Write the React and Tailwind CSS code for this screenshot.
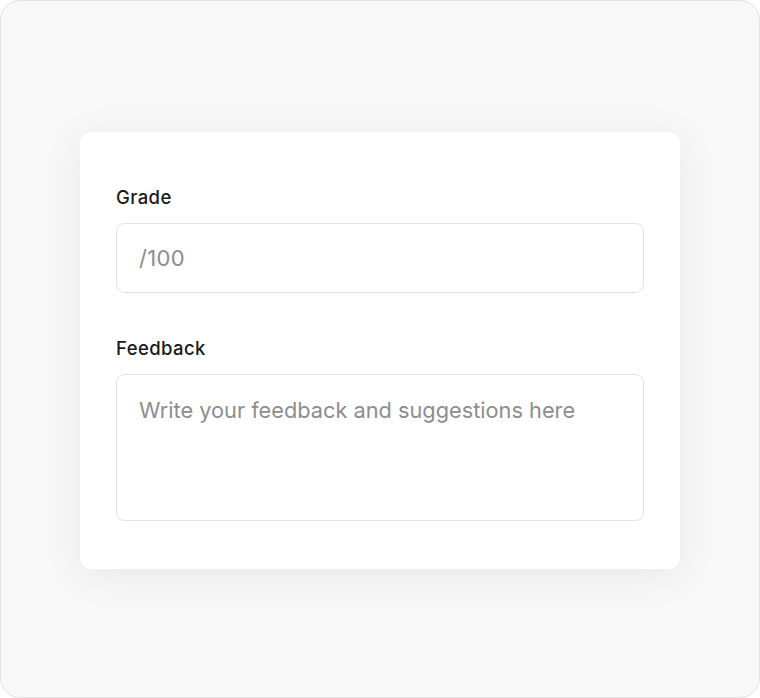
import React from "react";

export default function App() {
  return (
    <div className="w-[760px] h-[698px] bg-white" style={{ fontFamily: "Inter, 'Noto Sans', sans-serif" }}>
      <div className="w-full h-full rounded-[20px] border border-[#e3e3e3] bg-[#f8f8f8] flex items-start justify-center pt-[131px]">
        {/* Card */}
        <div className="w-[600px] rounded-xl bg-white shadow-[0_6px_40px_rgba(0,0,0,0.07)] px-9 pt-[51px] pb-[48px] flex flex-col gap-[41px]">
          <div className="flex flex-col gap-3">
            <label className="text-[18.5px] leading-7 tracking-[0.4px] font-medium text-[#1a1a1a]">Grade</label>
            <input
              type="text"
              placeholder="/100"
              className="h-[70px] w-full rounded-lg border border-[#e4e4e4] px-[22px] text-[22px] tracking-[0.3px] text-[#1a1a1a] placeholder:text-[#8d8d8d] outline-none"
            />
          </div>
          <div className="flex flex-col gap-3">
            <label className="text-[18.5px] leading-7 tracking-[0.4px] font-medium text-[#1a1a1a]">Feedback</label>
            <textarea
              placeholder="Write your feedback and suggestions here"
              className="h-[147px] w-full resize-none rounded-lg border border-[#e4e4e4] px-[22px] py-[19px] text-[21.75px] leading-8 text-[#1a1a1a] placeholder:text-[#8d8d8d] outline-none"
            />
          </div>
        </div>
      </div>
    </div>
  );
}
